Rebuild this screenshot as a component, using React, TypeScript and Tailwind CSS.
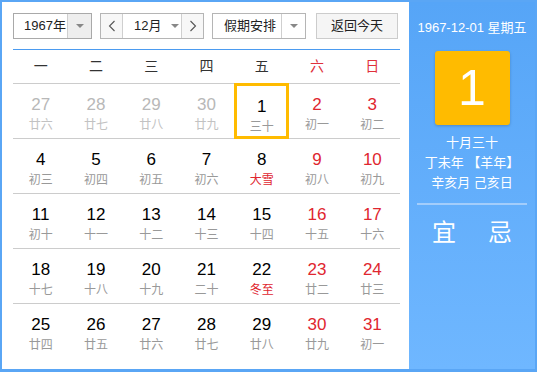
import React from "react";

type Cell = { d: number; l: string; muted?: boolean; red?: boolean; term?: boolean; sel?: boolean };

const rows: Cell[][] = [
  [
    { d: 27, l: "廿六", muted: true },
    { d: 28, l: "廿七", muted: true },
    { d: 29, l: "廿八", muted: true },
    { d: 30, l: "廿九", muted: true },
    { d: 1, l: "三十", sel: true },
    { d: 2, l: "初一", red: true },
    { d: 3, l: "初二", red: true },
  ],
  [
    { d: 4, l: "初三" },
    { d: 5, l: "初四" },
    { d: 6, l: "初五" },
    { d: 7, l: "初六" },
    { d: 8, l: "大雪", term: true },
    { d: 9, l: "初八", red: true },
    { d: 10, l: "初九", red: true },
  ],
  [
    { d: 11, l: "初十" },
    { d: 12, l: "十一" },
    { d: 13, l: "十二" },
    { d: 14, l: "十三" },
    { d: 15, l: "十四" },
    { d: 16, l: "十五", red: true },
    { d: 17, l: "十六", red: true },
  ],
  [
    { d: 18, l: "十七" },
    { d: 19, l: "十八" },
    { d: 20, l: "十九" },
    { d: 21, l: "二十" },
    { d: 22, l: "冬至", term: true },
    { d: 23, l: "廿二", red: true },
    { d: 24, l: "廿三", red: true },
  ],
  [
    { d: 25, l: "廿四" },
    { d: 26, l: "廿五" },
    { d: 27, l: "廿六" },
    { d: 28, l: "廿七" },
    { d: 29, l: "廿八" },
    { d: 30, l: "廿九", red: true },
    { d: 31, l: "初一", red: true },
  ],
];

const weekdays = ["一", "二", "三", "四", "五", "六", "日"];

const FONT = { fontFamily: '"Liberation Sans", "Noto Sans CJK SC", Arial, sans-serif' };

function Caret() {
  return (
    <span className="block w-0 h-0 border-l-[4px] border-r-[4px] border-t-[4px] border-l-transparent border-r-transparent border-t-[#888]" />
  );
}

function Chevron({ left }: { left?: boolean }) {
  return (
    <svg width="8" height="12" viewBox="0 0 8 12">
      <polyline
        points={left ? "6.5,1 1.5,6 6.5,11" : "1.5,1 6.5,6 1.5,11"}
        fill="none"
        stroke="#555"
        strokeWidth="1.1"
      />
    </svg>
  );
}

export default function App() {
  return (
    <div
      className="w-[537px] h-[372px] flex border-2 border-b-[3px] border-[#5aa6f5] bg-white text-black overflow-hidden"
      style={FONT}
    >
      {/* Left calendar */}
      <div className="w-[407px] shrink-0 pl-[11px] pr-[9px] pt-[11px]">
        {/* controls */}
        <div className="flex h-[26px] items-stretch text-[13px] text-[#222] whitespace-nowrap">
          <div className="flex w-[79px] border border-[#a9a9a9]">
            <div className="flex-1 flex items-center pl-[10px]">1967年</div>
            <div className="w-[24px] bg-[#eeeeee] border-l border-[#cfcfcf] flex items-center justify-center">
              <Caret />
            </div>
          </div>
          <div className="flex ml-[8px] w-[104px] border border-[#b5b5b5]">
            <div className="w-[22px] border-r border-[#cfcfcf] bg-[#f7f7f7] flex items-center justify-center">
              <Chevron left />
            </div>
            <div className="flex-1 flex items-center pl-[11px] gap-[10px]">
              <span>12月</span>
              <Caret />
            </div>
            <div className="w-[22px] border-l border-[#cfcfcf] bg-[#f7f7f7] flex items-center justify-center">
              <Chevron />
            </div>
          </div>
          <div className="flex ml-[8px] w-[94px] border border-[#b5b5b5]">
            <div className="flex-1 flex items-center pl-[11px]">假期安排</div>
            <div className="w-[24px] border-l border-[#cfcfcf] flex items-center justify-center">
              <Caret />
            </div>
          </div>
          <div className="ml-[10px] w-[82px] border border-[#cccccc] bg-[#f5f5f5] flex items-center justify-center">
            返回今天
          </div>
        </div>

        <div className="mt-[10px] h-px bg-[#4b9bf0]" />

        {/* weekday header */}
        <div className="grid grid-cols-7 h-[34px] border-b border-[#cccccc] text-[14px]">
          {weekdays.map((w, i) => (
            <div
              key={w}
              className={`flex items-center justify-center ${i >= 5 ? "text-[#e0303a]" : "text-[#333]"}`}
            >
              {w}
            </div>
          ))}
        </div>

        {/* days */}
        {rows.map((row, ri) => (
          <div
            key={ri}
            className={`grid grid-cols-7 h-[55px] ${ri < rows.length - 1 ? "border-b border-[#cccccc]" : ""}`}
          >
            {row.map((c, ci) => (
              <div
                key={ci}
                className={`relative flex flex-col items-center pt-[12px] ${c.sel ? "border-[3px] border-[#ffbb00] -mt-px h-[56px] pt-[10px]" : ""}`}
              >
                <div
                  className={`text-[17px] leading-[18px] ${
                    c.muted ? "text-[#b8b8b8]" : c.red ? "text-[#e0262f]" : "text-black"
                  }`}
                >
                  {c.d}
                </div>
                <div
                  className={`mt-[3px] text-[12px] leading-[16px] ${
                    c.muted ? "text-[#c2c2c2]" : c.term ? "text-[#e0262f]" : "text-[#999999]"
                  }`}
                >
                  {c.l}
                </div>
              </div>
            ))}
          </div>
        ))}
      </div>

      {/* Right panel */}
      <div className="flex-1 flex flex-col items-center bg-gradient-to-b from-[#56a5f7] to-[#6fb7ff] text-white">
        <div className="mt-[17px] text-[13px] leading-[18px] whitespace-nowrap">1967-12-01 星期五</div>
        <div className="mt-[14px] w-[75px] h-[74px] rounded-[3px] bg-[#ffbb00] shadow-[0_1px_3px_rgba(0,0,0,0.2)] flex items-center justify-center text-[50px] leading-none">
          1
        </div>
        <div className="mt-[8px] text-[13px] leading-[20px]">十月三十</div>
        <div className="text-[13px] leading-[20px]">丁未年 【羊年】</div>
        <div className="text-[13px] leading-[20px]">辛亥月 己亥日</div>
        <div className="mt-[10px] w-[110px] h-[2px] bg-[#a3cdfb]" />
        <div className="mt-[13px] flex gap-[32px] text-[24px] leading-[30px]">
          <span>宜</span>
          <span>忌</span>
        </div>
      </div>
    </div>
  );
}
